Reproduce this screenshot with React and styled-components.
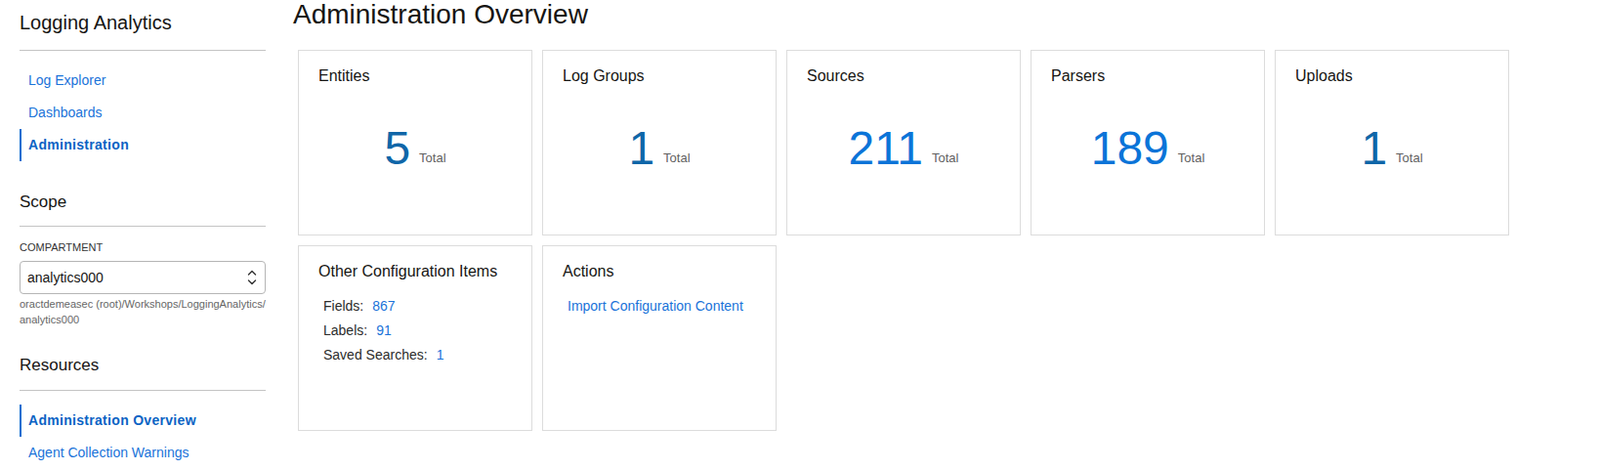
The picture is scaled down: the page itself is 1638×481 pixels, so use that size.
import React from "react";
import styled, { createGlobalStyle } from "styled-components";

const GlobalStyle = createGlobalStyle`
  body {
    margin: 0;
    background: #fff;
    font-family: "Liberation Sans", Arial, sans-serif;
    color: #161513;
  }
`;

const Page = styled.div`
  display: flex;
  align-items: flex-start;
  width: 1638px;
  height: 481px;
  overflow: hidden;
`;

const Sidebar = styled.aside`
  width: 252px;
  margin-left: 20px;
  padding-top: 11px;
  flex-shrink: 0;
`;

const SideTitle = styled.div`
  font-size: 20px;
  line-height: 24px;
  padding-bottom: 16px;
  border-bottom: 1px solid #c4c4c4;
`;

const SectionTitle = styled.div`
  margin-top: ${(p) => p.top}px;
  font-size: 17px;
  line-height: 20px;
  padding-bottom: ${(p) => p.pad}px;
  border-bottom: 1px solid #c4c4c4;
`;

const NavList = styled.ul`
  list-style: none;
  margin: 14px 0 0;
  padding: 0;
`;

const NavItem = styled.li`
  height: 33px;
  line-height: 33px;
  font-size: 14px;
  padding-left: 7px;
  border-left: 2px solid ${(p) => (p.active ? "#0b6ed0" : "transparent")};
  color: ${(p) => (p.active ? "#0b63c4" : "#1a73d9")};
  font-weight: ${(p) => (p.active ? "bold" : "normal")};
  letter-spacing: ${(p) => (p.active ? "0.3px" : "0")};
  white-space: nowrap;
`;

const FieldLabel = styled.div`
  margin-top: 14px;
  font-size: 11px;
  line-height: 14px;
  text-transform: uppercase;
  color: #333;
`;

const SelectBox = styled.div`
  margin-top: 7px;
  height: 34px;
  box-sizing: border-box;
  border: 1px solid #b5b5b5;
  border-radius: 4px;
  display: flex;
  align-items: center;
  justify-content: space-between;
  padding: 0 8px 0 7px;
  font-size: 14px;
  color: #161513;
`;

const HelpText = styled.div`
  margin-top: 2px;
  font-size: 11px;
  line-height: 16px;
  color: #666;
  white-space: nowrap;
`;

const Main = styled.main`
  margin-left: 28px;
`;

const PageTitle = styled.h1`
  margin: 0;
  font-size: 28px;
  line-height: 30px;
  font-weight: normal;
  color: #161513;
`;

const CardGrid = styled.div`
  margin: 21px 0 0 5px;
  display: grid;
  grid-template-columns: repeat(5, 240px);
  grid-auto-rows: 190px;
  gap: 10px;
`;

const Card = styled.section`
  box-sizing: border-box;
  border: 1px solid #dcdcdc;
  padding: 16px 20px;
`;

const CardTitle = styled.div`
  font-size: 16px;
  line-height: 20px;
  color: #161513;
`;

const Stat = styled.div`
  margin-top: 40px;
  display: flex;
  justify-content: center;
  align-items: flex-end;
  gap: 9px;
`;

const StatNumber = styled.span`
  font-size: 48px;
  line-height: 48px;
  color: ${(p) => (p.bright ? "#0b74d8" : "#0f66a8")};
`;

const StatUnit = styled.span`
  font-size: 13px;
  line-height: 13px;
  padding-bottom: 8px;
  color: #5f5f5f;
`;

const ItemList = styled.div`
  margin-top: 13px;
  padding-left: 5px;
`;

const ItemRow = styled.div`
  display: flex;
  gap: 9px;
  font-size: 14px;
  line-height: 25px;
  color: #2b2b2b;
`;

const ItemValue = styled.span`
  color: #1a73d9;
`;

const ActionLink = styled.a`
  font-size: 14px;
  line-height: 25px;
  color: #1a73d9;
  text-decoration: none;
  cursor: pointer;
`;

const UpDown = () => (
  <svg width="10" height="16" viewBox="0 0 10 16" fill="none" stroke="#333" strokeWidth="1.4" strokeLinecap="round" strokeLinejoin="round">
    <polyline points="1.5,5 5,1.5 8.5,5" />
    <polyline points="1.5,11 5,14.5 8.5,11" />
  </svg>
);

const stats = [
  { title: "Entities", value: 5 },
  { title: "Log Groups", value: 1 },
  { title: "Sources", value: 211, bright: true },
  { title: "Parsers", value: 189, bright: true },
  { title: "Uploads", value: 1 },
];

const configItems = [
  { label: "Fields:", value: 867 },
  { label: "Labels:", value: 91 },
  { label: "Saved Searches:", value: 1 },
];

export default function App() {
  return (
    <>
      <GlobalStyle />
      <Page>
        <Sidebar>
          <SideTitle>Logging Analytics</SideTitle>
          <NavList>
            <NavItem>Log Explorer</NavItem>
            <NavItem>Dashboards</NavItem>
            <NavItem active>Administration</NavItem>
          </NavList>

          <SectionTitle top={32} pad={14}>Scope</SectionTitle>
          <FieldLabel>Compartment</FieldLabel>
          <SelectBox>
            <span>analytics000</span>
            <UpDown />
          </SelectBox>
          <HelpText>
            oractdemeasec (root)/Workshops/LoggingAnalytics/
            <br />
            analytics000
          </HelpText>

          <SectionTitle top={29} pad={15}>Resources</SectionTitle>
          <NavList>
            <NavItem active>Administration Overview</NavItem>
            <NavItem>Agent Collection Warnings</NavItem>
          </NavList>
        </Sidebar>

        <Main>
          <PageTitle>Administration Overview</PageTitle>
          <CardGrid>
            {stats.map((s) => (
              <Card key={s.title}>
                <CardTitle>{s.title}</CardTitle>
                <Stat>
                  <StatNumber bright={s.bright}>{s.value}</StatNumber>
                  <StatUnit>Total</StatUnit>
                </Stat>
              </Card>
            ))}
            <Card>
              <CardTitle>Other Configuration Items</CardTitle>
              <ItemList>
                {configItems.map((it) => (
                  <ItemRow key={it.label}>
                    <span>{it.label}</span>
                    <ItemValue>{it.value}</ItemValue>
                  </ItemRow>
                ))}
              </ItemList>
            </Card>
            <Card>
              <CardTitle>Actions</CardTitle>
              <ItemList>
                <ActionLink>Import Configuration Content</ActionLink>
              </ItemList>
            </Card>
          </CardGrid>
        </Main>
      </Page>
    </>
  );
}
